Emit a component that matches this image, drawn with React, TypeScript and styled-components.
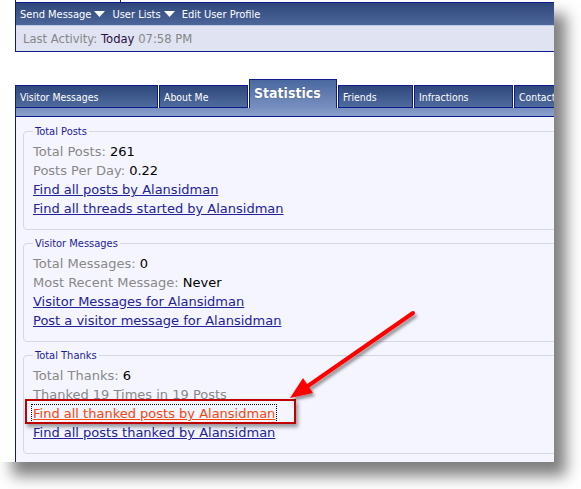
import styled, { createGlobalStyle } from 'styled-components';

const GlobalStyle = createGlobalStyle`
  html, body {
    margin: 0;
    padding: 0;
    background: #fff;
  }
  body {
    width: 581px;
    height: 489px;
    overflow: hidden;
  }
`;

const navy = '#0d1b8c';

const Shot = styled.div`
  position: relative;
  width: 554px;
  height: 462px;
  overflow: hidden;
  background: #fff;
  box-shadow: 12px 14px 14px rgba(0, 0, 0, 0.5);
  font-family: "DejaVu Sans", Verdana, sans-serif;
`;

const Page = styled.div`
  width: 640px;
  padding-left: 15px;
`;

/* bottom edge of the block above the profile */
const Stub = styled.div`
  height: 2px;
  display: flex;
`;

const StubCell = styled.div`
  width: 104px;
  border-left: 1px solid ${navy};
  border-right: 1px solid ${navy};
`;

const ProfileBox = styled.div`
  border: 1px solid ${navy};
  border-right: none;
`;

const NavBar = styled.div`
  height: 22px;
  display: flex;
  align-items: center;
  padding-left: 4px;
  background: linear-gradient(#2f477b, #4d669a);
  border-bottom: 1px solid #c3cbe2;
`;

const NavItem = styled.span`
  display: inline-flex;
  align-items: center;
  color: #fff;
  font-family: "DejaVu Sans Condensed", "DejaVu Sans", sans-serif;
  font-size: 11px;
  margin-right: 7px;

  svg {
    margin-left: 3px;
  }
`;

const ActivityBar = styled.div`
  height: 25px;
  display: flex;
  align-items: center;
  padding-left: 7px;
  background: #e0e3f2;
  font-size: 11.6px;
  color: #868686;
`;

const Dark = styled.span`
  color: #2a1040;
`;

const TabRow = styled.div`
  margin-top: 27px;
  height: 29px;
  display: flex;
  align-items: flex-end;
  gap: 1px;
`;

const Tab = styled.div<{ $w: number; $active?: boolean }>`
  box-sizing: border-box;
  width: ${p => p.$w}px;
  flex: none;
  border: 1px solid ${navy};
  color: #fff;
  font-family: "DejaVu Sans Condensed", "DejaVu Sans", sans-serif;
  white-space: nowrap;
  overflow: hidden;
  ${p => p.$active ? `
    height: 29px;
    border-bottom: none;
    padding: 4px 0 0 4px;
    font-size: 14px;
    font-weight: bold;
    line-height: 18px;
    background: linear-gradient(#4a68a0, #7890c0);
    text-shadow: 0 0 1px #2a3a6a;
  ` : `
    height: 23px;
    padding: 1px 0 0 4px;
    font-size: 10.4px;
    line-height: 21px;
    background: linear-gradient(#30487c, #4f6b9d);
  `}
`;

const TabStrip = styled.div`
  height: 8px;
  border-left: 1px solid ${navy};
  border-bottom: 1px solid ${navy};
  background: linear-gradient(#7890c0, #8ca1ca);
`;

const Content = styled.div`
  border-left: 1px solid ${navy};
  background: #f5f5ff;
  padding: 8px 0 12px 7px;
`;

const Block = styled.fieldset`
  margin: 0 0 7px;
  border: 1px solid #d2d9e0;
  border-radius: 4px;
  padding: 4px 9px 11px 9px;
`;

const Legend = styled.legend`
  padding: 0 2px;
  font-family: "DejaVu Sans Condensed", "DejaVu Sans", sans-serif;
  font-size: 11px;
  line-height: 13px;
  color: #1c1c9c;
`;

const Row = styled.div`
  font-size: 13px;
  line-height: 19px;
  white-space: nowrap;
  color: #000;
`;

const Label = styled.span`
  color: #888;
`;

const StatLink = styled.a<{ $focused?: boolean }>`
  color: ${p => (p.$focused ? '#f2470f' : '#22229c')};
  text-decoration: underline;
  ${p => p.$focused && 'outline: 1px dotted #000; outline-offset: 1px;'}
`;

const Callout = styled.div`
  position: absolute;
  left: 25px;
  top: 399px;
  width: 271px;
  height: 25px;
  box-sizing: border-box;
  border: 2px solid #c00000;
  box-shadow: 2px 3px 4px rgba(0, 0, 0, 0.4);
`;

const ArrowLayer = styled.svg`
  position: absolute;
  left: 0;
  top: 0;
  pointer-events: none;
`;

const Caret = () => (
  <svg width="11" height="6" viewBox="0 0 11 6">
    <polygon points="0,0 11,0 5.5,6" fill="#fff" />
  </svg>
);

const tabs = [
  { name: 'Visitor Messages', w: 143 },
  { name: 'About Me', w: 89 },
  { name: 'Statistics', w: 88, active: true },
  { name: 'Friends', w: 75 },
  { name: 'Infractions', w: 99 },
  { name: 'Contact Info', w: 100 },
];

export default function App() {
  return (
    <>
      <GlobalStyle />
      <Shot>
        <Page>
          <Stub><StubCell /></Stub>
          <ProfileBox>
            <NavBar>
              <NavItem>Send Message<Caret /></NavItem>
              <NavItem>User Lists<Caret /></NavItem>
              <NavItem>Edit User Profile</NavItem>
            </NavBar>
            <ActivityBar>
              Last Activity:&nbsp;<Dark>Today</Dark>&nbsp;07:58 PM
            </ActivityBar>
          </ProfileBox>

          <TabRow>
            {tabs.map(t => (
              <Tab key={t.name} $w={t.w} $active={t.active}>{t.name}</Tab>
            ))}
          </TabRow>
          <TabStrip />

          <Content>
            <Block>
              <Legend>Total Posts</Legend>
              <Row><Label>Total Posts:</Label> 261</Row>
              <Row><Label>Posts Per Day:</Label> 0.22</Row>
              <Row><StatLink>Find all posts by Alansidman</StatLink></Row>
              <Row><StatLink>Find all threads started by Alansidman</StatLink></Row>
            </Block>
            <Block>
              <Legend>Visitor Messages</Legend>
              <Row><Label>Total Messages:</Label> 0</Row>
              <Row><Label>Most Recent Message:</Label> Never</Row>
              <Row><StatLink>Visitor Messages for Alansidman</StatLink></Row>
              <Row><StatLink>Post a visitor message for Alansidman</StatLink></Row>
            </Block>
            <Block>
              <Legend>Total Thanks</Legend>
              <Row><Label>Total Thanks:</Label> 6</Row>
              <Row><Label>Thanked 19 Times in 19 Posts</Label></Row>
              <Row><StatLink $focused>Find all thanked posts by Alansidman</StatLink></Row>
              <Row><StatLink>Find all posts thanked by Alansidman</StatLink></Row>
            </Block>
          </Content>
        </Page>

        <Callout />
        <ArrowLayer width="554" height="462">
          <defs>
            <filter id="arrowShadow" x="-20%" y="-20%" width="140%" height="140%">
              <feDropShadow dx="2" dy="3" stdDeviation="1.5" floodColor="#000" floodOpacity="0.4" />
            </filter>
          </defs>
          <g filter="url(#arrowShadow)">
            <line x1="413" y1="313" x2="305" y2="388" stroke="#ff0000" strokeWidth="4" strokeLinecap="round" />
            <polygon points="290,398 303,378 313,393" fill="#ff0000" />
          </g>
        </ArrowLayer>
      </Shot>
    </>
  );
}
